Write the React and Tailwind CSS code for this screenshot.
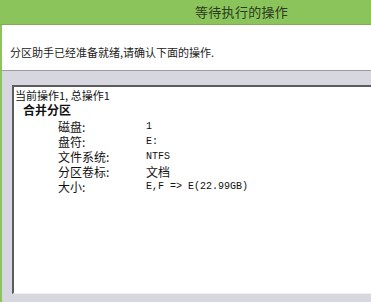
import React from "react";

const cjk = { fontFamily: '"Noto Sans CJK SC", "Noto Sans", sans-serif' };

const rows = [
  ["磁盘:", "1", false],
  ["盘符:", "E:", false],
  ["文件系统:", "NTFS", false],
  ["分区卷标:", "文档", true],
  ["大小:", "E,F => E(22.99GB)", false],
];

export default function App() {
  return (
    <div
      className="w-[371px] h-[302px] overflow-hidden flex flex-col bg-white text-[#111]"
      style={cjk}
    >
      <div className="h-[25px] shrink-0 bg-[#8bc45a] flex items-center pl-[195px] border-b border-[#7fae55]">
        <span className="block text-[13px] leading-[16px] text-[#2b3a22] tracking-[0.3px]">等待执行的操作</span>
      </div>
      <div className="flex flex-1 min-h-0">
        <div className="w-[2px] shrink-0 bg-[#8bc45a]" />
        <div className="flex-1 flex flex-col min-w-0">
          <div className="h-[46px] shrink-0 bg-white border-b border-[#9a9aa2] flex items-center pl-[8px] pt-[8px]">
            <span className="block text-[11px] leading-[14px] text-[#222]">
              分区助手已经准备就绪,请确认下面的操作.
            </span>
          </div>
          <div className="flex-1 bg-[#d7d7df] pl-[10px] pt-[14px] pb-[8px] flex flex-col min-h-0">
            <div className="flex-1 bg-white border-l-2 border-t-2 border-[#5c5c60] border-b border-b-[#f0f0f0] pl-[1px] pt-[1px]">
              <div className="h-[14px] text-[11px] leading-[14px] whitespace-nowrap">
                当前操作1, 总操作1
              </div>
              <div className="h-[16px] pl-[8px] text-[12px] leading-[16px] font-bold whitespace-nowrap">
                合并分区
              </div>
              <div className="pt-[1px]">
                {rows.map(([label, value, isCjk]) => (
                  <div key={label} className="h-[15px] flex whitespace-nowrap">
                    <span className="block pl-[43px] w-[131px] text-[12px] leading-[15px]">{label}</span>
                    {isCjk ? (
                      <span className="block text-[12px] leading-[15px]">{value}</span>
                    ) : (
                      <span
                        className="block text-[10px] leading-[15px]"
                        style={{ fontFamily: '"Liberation Mono", monospace' }}
                      >
                        {value}
                      </span>
                    )}
                  </div>
                ))}
              </div>
            </div>
          </div>
        </div>
      </div>
    </div>
  );
}
